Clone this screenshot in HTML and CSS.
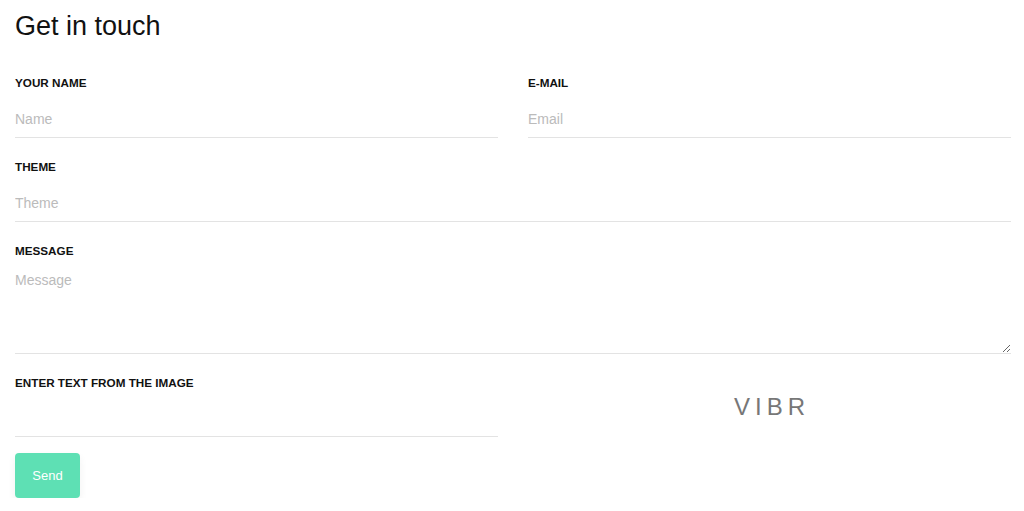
FILE: index.html
```html
<!DOCTYPE html>
<html lang="en">
<head>
<meta charset="utf-8">
<title>Get in touch</title>
<link rel="stylesheet" href="styles.css">
</head>
<body>
<main class="contact">
  <h1 class="title">Get in touch</h1>
  <form class="form">
    <div class="row two">
      <div class="field">
        <label class="label" for="name">YOUR NAME</label>
        <input class="input" id="name" type="text" placeholder="Name">
      </div>
      <div class="field">
        <label class="label" for="email">E-MAIL</label>
        <input class="input" id="email" type="email" placeholder="Email">
      </div>
    </div>
    <div class="row">
      <div class="field">
        <label class="label" for="theme">THEME</label>
        <input class="input" id="theme" type="text" placeholder="Theme">
      </div>
    </div>
    <div class="row">
      <div class="field">
        <label class="label" for="message">MESSAGE</label>
        <textarea class="textarea" id="message" placeholder="Message"></textarea>
      </div>
    </div>
    <div class="row two captcha-row">
      <div class="field">
        <label class="label" for="captcha">ENTER TEXT FROM THE IMAGE</label>
        <input class="input captcha-input" id="captcha" type="text">
      </div>
      <div class="captcha">VIBR</div>
    </div>
    <button class="send" type="button">Send</button>
  </form>
</main>
</body>
</html>
```
FILE: styles.css
```css
* { box-sizing: border-box; }
html, body { margin: 0; padding: 0; background: #fff; }
body {
  font-family: "Liberation Sans", Arial, sans-serif;
  color: #111;
}
.contact {
  width: 996px;
  margin-left: 15px;
}
.title {
  margin: 10px 0 0;
  font-size: 27px;
  line-height: 32px;
  font-weight: normal;
  color: #111;
}
.form {
  display: flex;
  flex-direction: column;
  margin-top: 34px;
}
.row { display: block; margin-bottom: 22px; }
.row.two {
  display: grid;
  grid-template-columns: 1fr 1fr;
  column-gap: 30px;
}
.field { display: flex; flex-direction: column; }
.label {
  font-size: 11.7px;
  line-height: 14px;
  font-weight: bold;
  color: #111;
  margin-bottom: 9px;
}
.input, .textarea {
  font-family: "Liberation Sans", Arial, sans-serif;
  font-size: 14px;
  color: #333;
  border: 0;
  border-bottom: 1px solid #e3e3e3;
  outline: none;
  background: transparent;
  padding: 0;
  margin: 0;
}
.input { height: 39px; padding-top: 2px; }
.captcha-input { height: 38px; }
.textarea {
  height: 87px;
  padding: 5px 0;
  resize: vertical;
}
.input::placeholder, .textarea::placeholder { color: #bbbbbb; opacity: 1; }
.captcha-row { align-items: center; margin-bottom: 16px; }
.captcha {
  text-align: center;
  font-size: 24px;
  letter-spacing: 5px;
  padding-left: 5px;
  color: #777;
}
.send {
  align-self: flex-start;
  width: 65px;
  height: 45px;
  border: 0;
  border-radius: 4px;
  background: #5ee0b4;
  color: #fff;
  font-family: "Liberation Sans", Arial, sans-serif;
  font-size: 13px;
  box-shadow: 0 4px 8px rgba(0, 0, 0, 0.06);
  cursor: pointer;
}
```
